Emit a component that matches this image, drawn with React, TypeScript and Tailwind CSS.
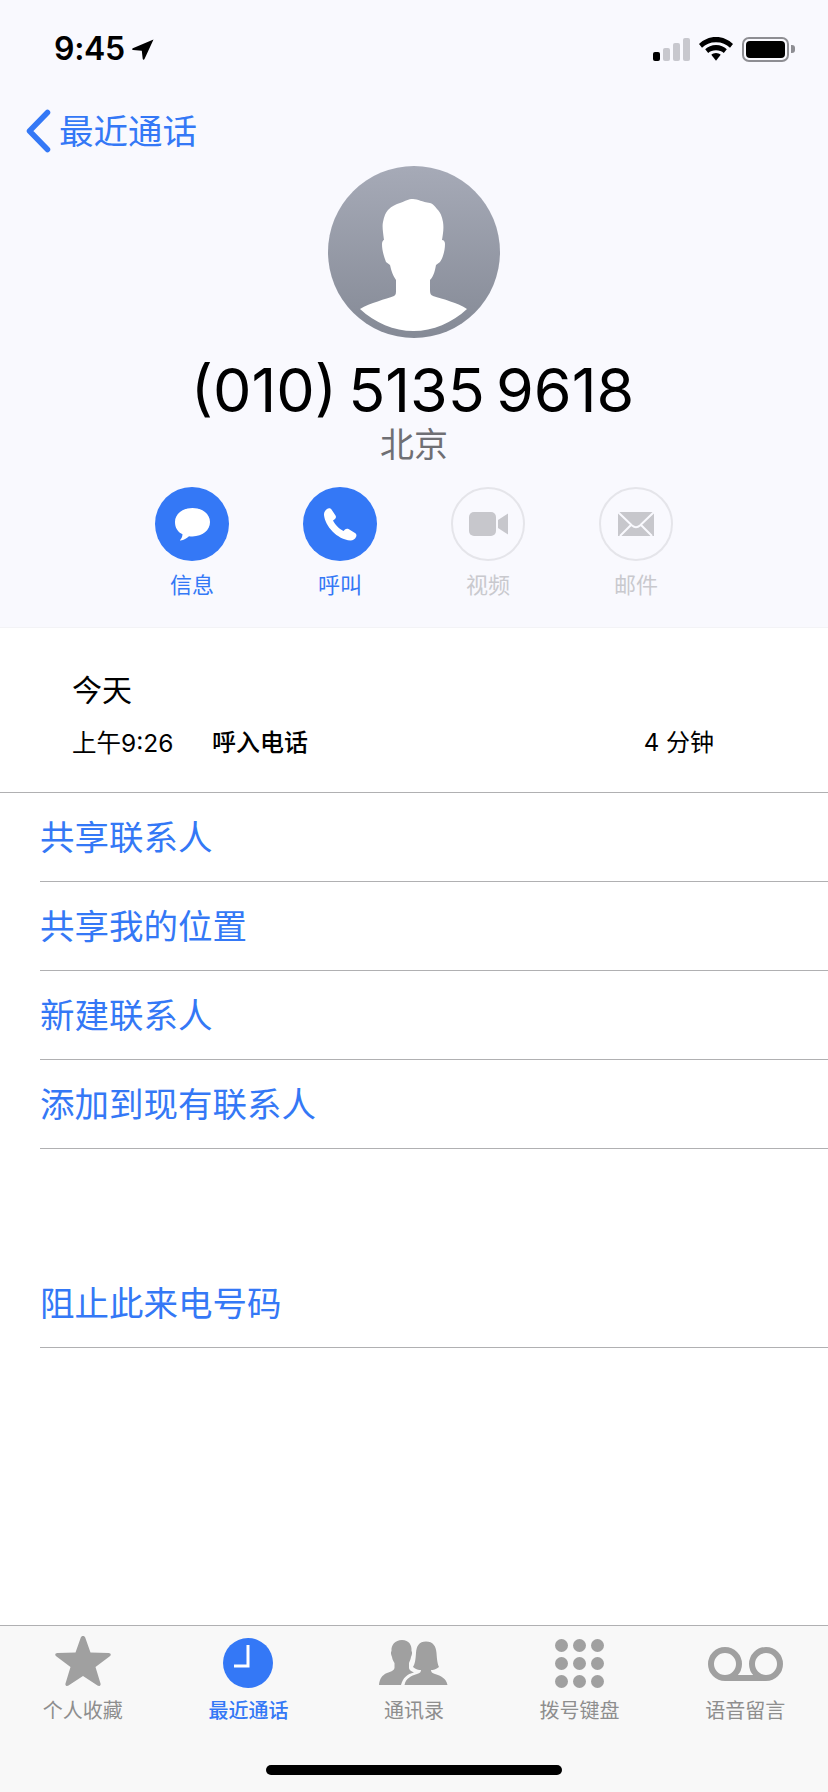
import React from 'react';

const SANS = 'font-["Inter","Noto_Sans_CJK_SC",sans-serif]';

const listRows = ['共享联系人', '共享我的位置', '新建联系人', '添加到现有联系人'];

const StatusBar = () => (
    <div className="h-[98px] flex items-center justify-between pl-[54px] pr-[33px]">
        <div className="flex items-center gap-[7px]">
            <span className="text-[32px] leading-none font-semibold text-black tracking-[-0.3px]">9:45</span>
            <svg width="22" height="21" viewBox="0 0 22 21">
                <path d="M21.5 0.5 L12.5 20 C12 21 10.8 20.8 10.7 19.7 L9.8 11.8 L1 11 C0 10.9 -0.2 9.8 0.8 9.3 Z" fill="#000" />
            </svg>
        </div>
        <div className="flex items-center">
            <div className="flex items-end gap-[3px] h-[24px]">
                <div className="w-[7px] h-[9px] rounded-[2px] bg-black" />
                <div className="w-[7px] h-[13px] rounded-[2px] bg-[#c8c8ce]" />
                <div className="w-[7px] h-[18px] rounded-[2px] bg-[#c8c8ce]" />
                <div className="w-[7px] h-[23px] rounded-[2px] bg-[#c8c8ce]" />
            </div>
            <svg className="ml-[9px]" width="34" height="24" viewBox="0 0 34 24">
                <path d="M17 0 C24 0 29.500 2.700 34 7 L31 10.800 C27.500 7.300 22.800 5.300 17 5.300 C11.200 5.300 6.500 7.300 3 10.800 L0 7 C4.500 2.700 10 0 17 0Z" fill="#000" />
                <path d="M17 8 C21.500 8 25 9.700 27.800 12.300 L24.800 16 C22.800 14.200 20.300 13.200 17 13.200 C13.700 13.200 11.200 14.200 9.200 16 L6.200 12.300 C9 9.700 12.500 8 17 8Z" fill="#000" />
                <path d="M17 16 C18.800 16 20.400 16.700 21.700 17.800 L17 23.800 L12.300 17.800 C13.600 16.700 15.200 16 17 16Z" fill="#000" />
            </svg>
            <div className="ml-[9px] w-[47px] h-[25px] rounded-[7px] border-[2px] border-[#8e8e93] p-[2px]">
                <div className="w-full h-full rounded-[4px] bg-black" />
            </div>
            <div className="ml-[2px] w-[4px] h-[8px] rounded-r-[3px] bg-[#8e8e93]" />
        </div>
    </div>
);

const Avatar = () => (
    <div className="w-[172px] h-[172px] rounded-full bg-gradient-to-b from-[#a6aab7] to-[#858a96] mt-[2px]">
        <svg width="172" height="172" viewBox="0 0 172 172">
            <path
                d="M32 143 C42 137 58 133 66 130 C68 129 68 127 68 124 L68 114 C64 108 63 103 62 99 L58 96 C55 88 54 83 54 78 C54 76 55 74 56 74 C55 66 54 60 55 56 C56 50 58 46 60 44 C64 40 68 38 72 37 C78 35 80 33 85 33 C90 33 94 36 102 37 C106 38 108 42 110 44 C112 46 114 50 115 56 C116 62 115 68 114 74 C116 74 117 76 117 78 C117 84 115 92 112 96 L108 99 C107 104 106 110 102 114 L102 124 C102 128 103 129 105 130 C115 133 130 137 139 143 C124 157 105 165 85.500 165 C66 165 47 157 32 143Z"
                fill="#fff"
            />
        </svg>
    </div>
);

const ActionButton: React.FC<{ label: string; active?: boolean; children: React.ReactNode }> = ({ label, active, children }) => (
    <div className="w-[148px] flex flex-col items-center">
        <div className={`w-[74px] h-[74px] rounded-full flex items-center justify-center ${active ? 'bg-[#3478f6]' : 'border-[2px] border-[#e5e5ea]'}`}>
            {children}
        </div>
        <div className={`mt-[9px] h-[30px] leading-[30px] text-[22px] ${active ? 'text-[#3478f6]' : 'text-[#c9c9ce]'}`}>{label}</div>
    </div>
);

const Header = () => (
    <div className="h-[628px] bg-[#f9f9fe] border-b border-[#f3f3f6] flex flex-col">
        <StatusBar />
        <div className="h-[66px] flex items-center pl-[25px]">
            <svg width="26" height="44" viewBox="0 0 26 44">
                <path d="M22.500 3.500 L4.500 22 L22.500 40.500" fill="none" stroke="#3478f6" strokeWidth="5.500" strokeLinecap="round" strokeLinejoin="round" />
            </svg>
            <span className="ml-[8px] mt-[2px] text-[34.500px] leading-none text-[#3478f6]">最近通话</span>
        </div>
        <div className="flex flex-col items-center">
            <Avatar />
            <div className="mt-[17px] -ml-[3px] h-[70px] leading-[70px] text-[61px] text-black [word-spacing:-6px]">(010) 5135 9618</div>
            <div className="h-[40px] leading-[40px] text-[34px] text-[#6f6f74]">北京</div>
            <div className="mt-[22px] flex">
                <ActionButton label="信息" active>
                    <svg width="37" height="33" viewBox="0 0 37 33">
                        <path d="M18.500 0 C28.500 0 36 6 36 14 C36 22.500 28.500 28 18.500 28.500 C17 28.500 16 28.500 15 28.300 C12.500 30.500 10 32 6.500 32.500 C6 32.500 5.800 32.200 6.100 31.900 C7.300 30.700 8.300 29.300 8.500 26.300 C3.500 24 1 19.500 1 14 C1 6 8.500 0 18.500 0Z" fill="#fff" />
                    </svg>
                </ActionButton>
                <ActionButton label="呼叫" active>
                    <svg width="33" height="33" viewBox="0 0 33 33">
                        <path d="M3 1 C4.500 -0.300 6.500 0 7.500 1.500 L11.500 7.500 C12.300 8.800 12 10 11 11 L9 12.500 C10.500 16 15 21 19.500 23 L21 21.500 C22 20.600 23.300 20.500 24.500 21 L31 25 C32.500 26 32.800 27.500 32 29 C31 31 29 32.500 26.500 32.500 C13 31.500 1 18 0 7 C-0.200 4.500 1 2.500 3 1Z" fill="#fff" />
                    </svg>
                </ActionButton>
                <ActionButton label="视频">
                    <svg width="39" height="24" viewBox="0 0 39 24">
                        <rect width="27" height="24" rx="5" fill="#c7c7cc" />
                        <path d="M29 8 L39 1.500 L39 22.500 L29 16Z" fill="#c7c7cc" />
                    </svg>
                </ActionButton>
                <ActionButton label="邮件">
                    <svg width="36" height="24" viewBox="0 0 36 24">
                        <rect width="36" height="24" fill="#c7c7cc" />
                        <path d="M0 0 L14 13.500 Q18 17 22 13.500 L36 0 M2 24 L13.500 12.500 M34 24 L22.500 12.500" fill="none" stroke="#f9f9fe" strokeWidth="2" />
                    </svg>
                </ActionButton>
            </div>
        </div>
    </div>
);

const CallInfo = () => (
    <div className="h-[165px] border-b border-[#b0b0b2] pl-[72px] pr-[114px]">
        <div className="pt-[41px] h-[42px] leading-[42px] text-[30px] text-black box-content">今天</div>
        <div className="mt-[14px] flex items-center h-[36px] text-[24.500px] text-black">
            <span className="w-[140px]">上午9:26</span>
            <span className="text-[24px] font-medium">呼入电话</span>
            <span className="ml-auto text-[24px]">4 分钟</span>
        </div>
    </div>
);

const ListRow: React.FC<{ label: string }> = ({ label }) => (
    <div className="ml-[40px] h-[89px] pt-[2px] border-b border-[#b0b0b2] flex items-center text-[34.500px] text-[#3478f6]">{label}</div>
);

const tabs = [
    { label: '个人收藏', icon: <svg width="56" height="52" viewBox="0 0 56 52" className="mb-[5px]"><path d="M28 1 C29 1 29.800 1.500 30.200 2.500 L35.500 17.500 L53.500 18 C55.800 18.100 56.500 20 54.800 21.300 L40.500 32 L45.500 48.500 C46.100 50.600 44.300 51.800 42.500 50.600 L28 41 L13.500 50.600 C11.700 51.800 9.900 50.600 10.500 48.500 L15.500 32 L1.200 21.300 C-0.500 20 0.200 18.100 2.500 18 L20.500 17.500 L25.800 2.500 C26.200 1.500 27 1 28 1Z" fill="#a0a0a0" /></svg> },
    { label: '最近通话', active: true, icon: <svg width="50" height="50" viewBox="0 0 50 50"><circle cx="25" cy="25" r="25" fill="#3478f6" /><path d="M25 7 V28 H11" fill="none" stroke="#fff" strokeWidth="3" /></svg> },
    { label: '通讯录', icon: <svg width="69" height="46" viewBox="0 0 69 46"><path d="M23 0 C30 0 33 5 32.500 11 C33.500 12 33 15 32 17 C31.500 20 30.500 21 30 23 L30 28 C30 30 32 31 35 32.500 C28 34 24 38 22 45 H0 C0.500 39 3 35 8 33 C12 31.500 15 30.500 15.500 28 L15.500 23 C14.500 21 13.500 20 13 17 C12 15 11.500 12 12.500 11 C12 5 16 0 23 0Z" fill="#a0a0a0" /><path d="M47 1.500 C54 1.500 57 6 57.500 13 C58 20 58.500 24 60 27 C57 29.500 54 30 52 30 C52 32 53 33 56 34 C62 36 67 38 68.500 45 H25.500 C27 38 32 36 38 34 C41 33 42 32 42 30 C40 30 36.500 29.500 34 27 C36 24 36.500 20 37 13 C37.500 6 40 1.500 47 1.500Z" fill="#a0a0a0" /></svg> },
    { label: '拨号键盘', icon: <svg width="49" height="49" viewBox="0 0 49 49" fill="#a0a0a0">
        <circle cx="6.500" cy="6.500" r="6.500" /><circle cx="24.500" cy="6.500" r="6.500" /><circle cx="42.500" cy="6.500" r="6.500" />
        <circle cx="6.500" cy="24.500" r="6.500" /><circle cx="24.500" cy="24.500" r="6.500" /><circle cx="42.500" cy="24.500" r="6.500" />
        <circle cx="6.500" cy="42.500" r="6.500" /><circle cx="24.500" cy="42.500" r="6.500" /><circle cx="42.500" cy="42.500" r="6.500" />
    </svg> },
    { label: '语音留言', icon: <svg width="75" height="34" viewBox="0 0 75 34" className="mt-[2px]"><path d="M17 31 H58" stroke="#a0a0a0" strokeWidth="6" /><circle cx="17" cy="17" r="14" fill="none" stroke="#a0a0a0" strokeWidth="6" /><circle cx="58" cy="17" r="14" fill="none" stroke="#a0a0a0" strokeWidth="6" /></svg> }
];

const TabBar = () => (
    <div className="h-[167px] bg-[#f8f8f8] border-t border-[#b0b0b2] flex flex-col">
        <div className="grid grid-cols-5 pt-[9px]">
            {tabs.map(tab => (
                <div key={tab.label} className="flex flex-col items-center">
                    <div className="h-[56px] flex items-center justify-center">{tab.icon}</div>
                    <div className={`mt-[5px] h-[30px] leading-[30px] text-[20px] ${tab.active ? 'text-[#3478f6] font-medium' : 'text-[#8e8e8e]'}`}>{tab.label}</div>
                </div>
            ))}
        </div>
        <div className="mt-auto mb-[17px] mx-auto w-[296px] h-[10px] rounded-full bg-black" />
    </div>
);

const App: React.FC = () => (
    <div className={`w-[828px] h-[1792px] bg-white flex flex-col overflow-hidden ${SANS}`}>
        <Header />
        <CallInfo />
        <div className="flex-1">
            {listRows.map(label => <ListRow key={label} label={label} />)}
            <div className="mt-[110px]">
                <ListRow label="阻止此来电号码" />
            </div>
        </div>
        <TabBar />
    </div>
);

export default App;
